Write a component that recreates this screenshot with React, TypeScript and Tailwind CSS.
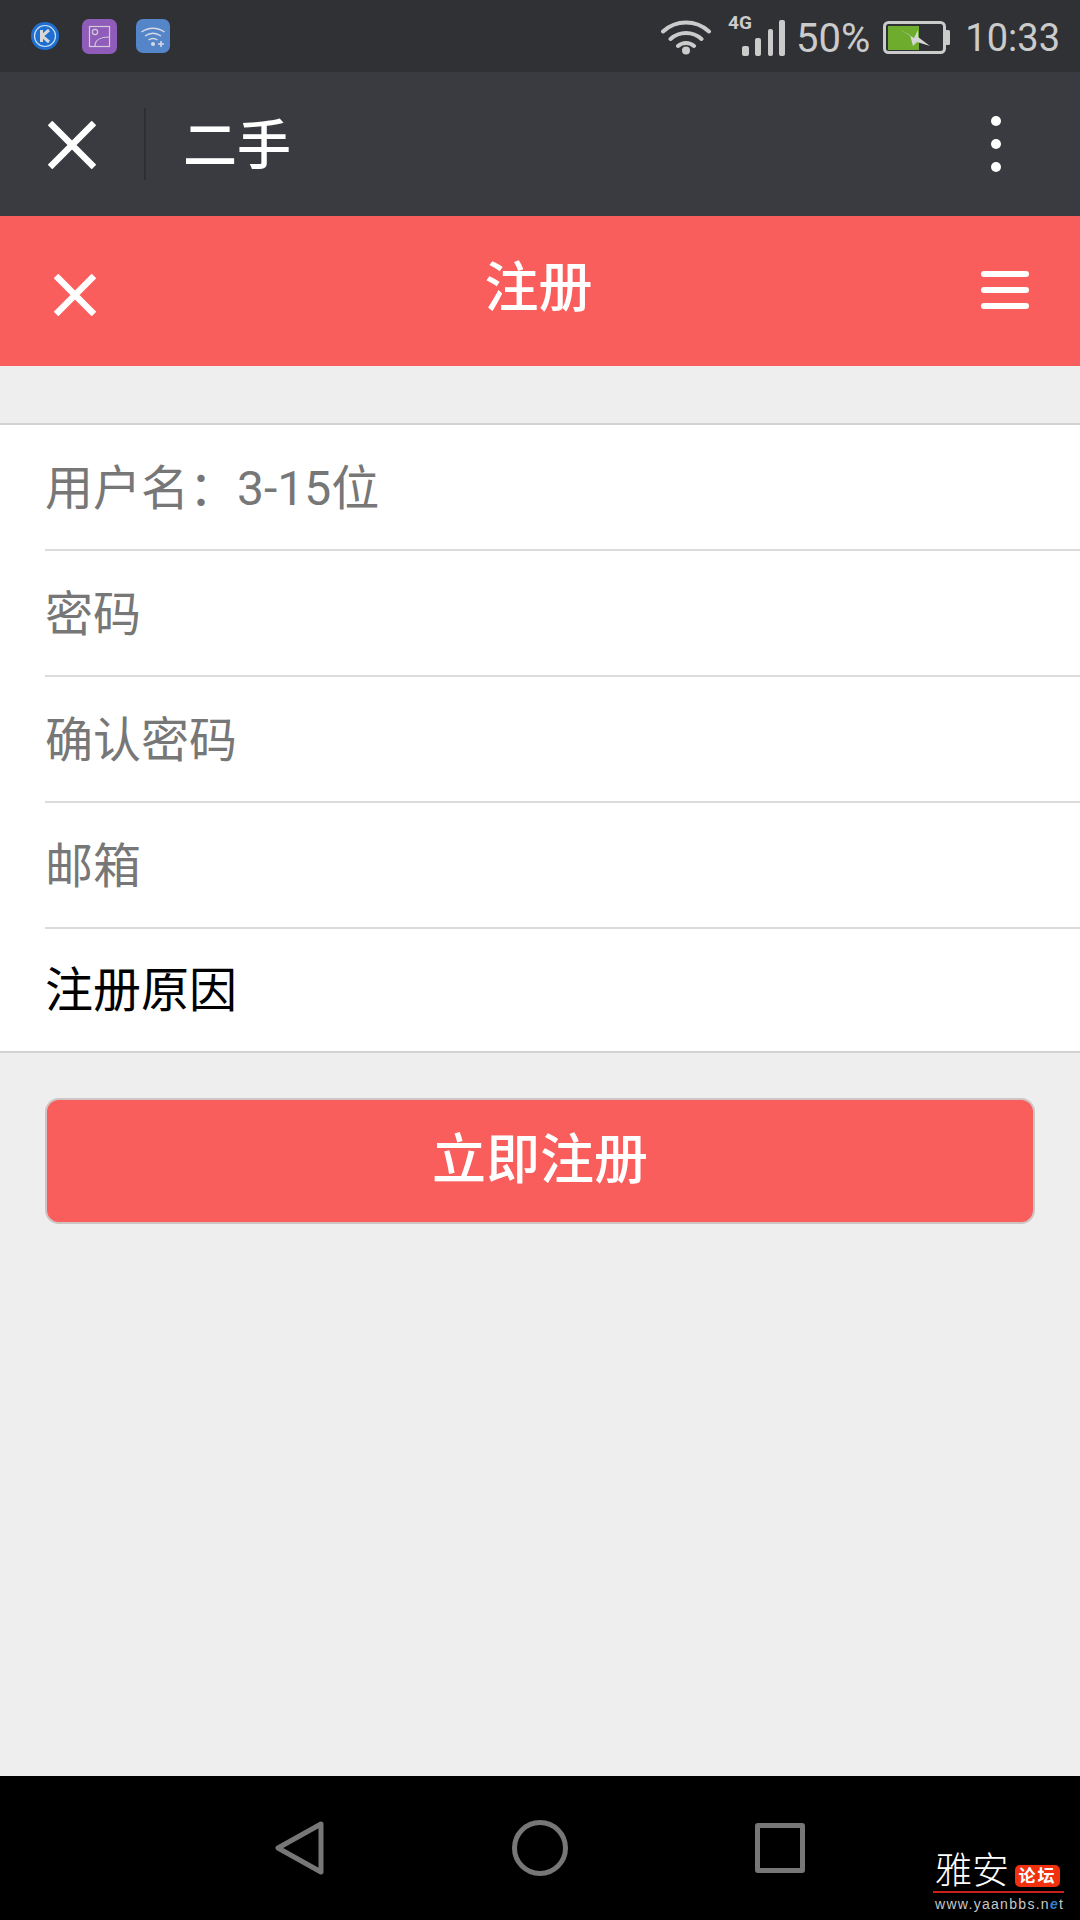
const roboto = "font-['Roboto','Noto_Sans_CJK_SC',sans-serif]";

function Row({ text, dark, last }: { text: string; dark?: boolean; last?: boolean }) {
  return (
    <div className={`ml-[45px] flex items-center ${last ? "h-[122px] pt-[2px]" : "h-[126px] border-b-2 border-[#dcdcdc] pt-[4px]"}`}>
      <span className={`text-[48px] leading-none ${dark ? "text-black" : "text-[#777777]"}`}>{text}</span>
    </div>
  );
}

function StatusBar() {
  return (
    <div className="flex h-[72px] items-center bg-[#303135] pl-[31px] pr-[20px]">
      <svg width="28" height="28" viewBox="0 0 28 28" className="mr-[23px]">
        <circle cx="14" cy="14" r="14" fill="#1e6fd0" />
        <circle cx="14" cy="14" r="10.5" fill="none" stroke="#cfe0f2" strokeWidth="1.2" />
        <path d="M10.500 8v12M18 8l-7 6 7 6" fill="none" stroke="#d8d8d8" strokeWidth="3" />
      </svg>
      <svg width="35" height="35" viewBox="0 0 35 35" className="mr-[19px]">
        <rect width="35" height="35" rx="7" fill="#8f5db9" />
        <rect x="7.5" y="7.5" width="20" height="20" fill="none" stroke="#d4cbd9" strokeWidth="1.2" />
        <circle cx="13" cy="13" r="2.6" fill="none" stroke="#d4cbd9" strokeWidth="1.2" />
        <path d="M13 27c0-6 6-9 14-9" fill="none" stroke="#d4cbd9" strokeWidth="1.2" />
      </svg>
      <svg width="34" height="34" viewBox="0 0 34 34">
        <rect width="34" height="34" rx="7" fill="#5585c9" />
        <path d="M5.5 13c7-5 16-5 23 0M9 17c5-3.5 11-3.5 16 0M12.5 21c3-2 6-2 9 0" fill="none" stroke="#d5dae3" strokeWidth="1.4" />
        <circle cx="17" cy="25" r="2" fill="#d5dae3" />
        <path d="M22 25h6M25 22v6" stroke="#d5dae3" strokeWidth="1.6" />
      </svg>

      <div className="ml-auto flex items-center text-[#cbcbcb]">
        <svg width="50" height="37" viewBox="0 0 50 37" className="mr-[17px]">
          <path d="M2 13.500c13-12 33-12 46 0M9.500 21c9-8 22-8 31 0M17 28c4.500-4 11.500-4 16 0" fill="none" stroke="#cbcbcb" strokeWidth="4" strokeLinecap="round" />
          <circle cx="25" cy="32.500" r="4" fill="#cbcbcb" />
        </svg>
        <div className="relative mr-[11px] h-[40px] w-[57px]">
          <span className="absolute left-0 top-[-3px] font-['Roboto',sans-serif] text-[19px] font-bold leading-[20px]">4G</span>
          <svg width="43" height="36" viewBox="0 0 43 36" className="absolute bottom-0 right-0">
            <rect x="0" y="26" width="7" height="10" rx="2" fill="#cbcbcb" />
            <rect x="13" y="18" width="6" height="18" rx="2" fill="#cbcbcb" />
            <rect x="26" y="9" width="5" height="27" rx="2" fill="#cbcbcb" />
            <rect x="37" y="0" width="6" height="36" rx="2" fill="#cbcbcb" />
          </svg>
        </div>
        <span className="mr-[13px] mt-[5px] font-['Roboto',sans-serif] text-[40px] leading-none">50%</span>
        <svg width="67" height="33" viewBox="0 0 67 33" className="mr-[15px] mt-[2px]">
          <rect x="1.500" y="1.500" width="60" height="30" rx="4" fill="none" stroke="#cbcbcb" strokeWidth="3" />
          <rect x="5" y="5" width="31" height="24" fill="#6dac2d" />
          <rect x="62" y="9" width="5" height="15" rx="1.500" fill="#cbcbcb" />
          <path d="M16 8l15 9 4-8v7l12 9-13-4-4 4-3-11z" fill="#d5d5d5" />
        </svg>
        <span className="mt-[4px] font-['Roboto',sans-serif] text-[38px] leading-none">10:33</span>
      </div>
    </div>
  );
}

function AppBar() {
  return (
    <div className="flex h-[144px] items-center bg-[#3a3b40]">
      <svg width="48" height="48" viewBox="0 0 48 48" className="ml-[48px] mt-[2px]">
        <path d="M2 2l44 44M46 2L2 46" stroke="#ffffff" strokeWidth="6.500" />
      </svg>
      <div className="ml-[48px] h-[72px] w-[2px] bg-[#2e2f33]" />
      <span className="ml-[37px] mt-[6px] text-[54px] font-medium leading-none text-white">二手</span>
      <div className="ml-auto mr-[79px] flex flex-col gap-[13px]">
        <div className="h-[10px] w-[10px] rounded-full bg-white" />
        <div className="h-[10px] w-[10px] rounded-full bg-white" />
        <div className="h-[10px] w-[10px] rounded-full bg-white" />
      </div>
    </div>
  );
}

function PageHeader() {
  return (
    <div className="flex h-[150px] items-center justify-between bg-[#f95e5c] pl-[54px] pr-[51px]">
      <svg width="42" height="42" viewBox="0 0 42 42" className="mt-[7px]">
        <path d="M2 2l38 38M40 2L2 40" stroke="#ffffff" strokeWidth="6.500" />
      </svg>
      <span className="mb-[4px] text-[54px] font-medium leading-none text-white">注册</span>
      <div className="mb-[3px] flex flex-col gap-[10px]">
        <div className="h-[6px] w-[48px] rounded-full bg-white" />
        <div className="h-[6px] w-[48px] rounded-full bg-white" />
        <div className="h-[6px] w-[48px] rounded-full bg-white" />
      </div>
    </div>
  );
}

function NavBar() {
  return (
    <div className="relative flex h-[144px] items-center bg-black pl-[274px]">
      <svg width="52" height="56" viewBox="0 0 52 56">
        <path d="M47 4L4 28l43 24z" fill="none" stroke="#777777" strokeWidth="5" strokeLinejoin="round" />
      </svg>
      <svg width="56" height="56" viewBox="0 0 56 56" className="ml-[186px]">
        <circle cx="28" cy="28" r="25.500" fill="none" stroke="#777777" strokeWidth="5" />
      </svg>
      <div className="ml-[187px] h-[50px] w-[50px] rounded-[3px] border-[5px] border-[#777777]" />

      {/* watermark stamped over the nav bar */}
      <div className="absolute bottom-[9px] left-[933px] w-[131px]">
        <div className="flex h-[39px] items-center border-b-2 border-[#c9201c] pb-[1px] pl-[2px]">
          <span className="text-[37px] font-light leading-[36px] text-white">雅安</span>
          <span className="ml-[6px] mt-[8px] flex h-[22px] w-[45px] items-center justify-center rounded-[5px] bg-[#f0300f] text-[17px] font-bold leading-none tracking-[2px] text-white">论坛</span>
        </div>
        <div className="mt-[4px] whitespace-nowrap pl-[2px] font-['Liberation_Sans',sans-serif] text-[14px] leading-[14px] tracking-[1.300px] text-[#c8c8c8]">
          www.yaanbbs.n<span className="font-bold italic text-[#2f7fd0]">e</span>t
        </div>
      </div>
    </div>
  );
}

export default function App() {
  return (
    <div className={`flex h-[1920px] w-[1080px] flex-col bg-[#eeeeee] ${roboto}`}>
      <StatusBar />
      <AppBar />
      <PageHeader />

      <div className="mt-[57px] border-y-2 border-[#d2d2d2] bg-white">
        <Row text="用户名：3-15位" />
        <Row text="密码" />
        <Row text="确认密码" />
        <Row text="邮箱" />
        <Row text="注册原因" dark last />
      </div>

      <div className="mx-[45px] mt-[45px] flex h-[126px] items-center justify-center rounded-[14px] border-2 border-[#cfc4c4] bg-[#f95e5c]">
        <span className="text-[54px] font-medium leading-none text-white">立即注册</span>
      </div>

      <div className="flex-1" />
      <NavBar />
    </div>
  );
}
